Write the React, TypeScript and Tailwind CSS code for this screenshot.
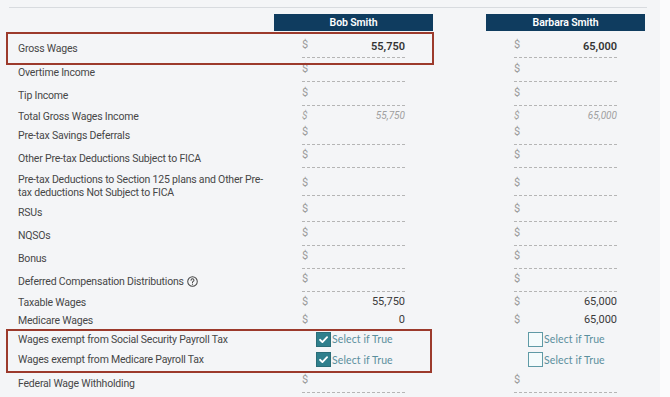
import React from "react";

type Row = {
  label: React.ReactNode;
  h: string;
  kind: "input" | "total" | "calc" | "check";
  bob?: string;
  barb?: string;
  bold?: boolean;
  bobChecked?: boolean;
  barbChecked?: boolean;
};

function QIcon() {
  return (
    <svg width="11" height="11" viewBox="0 0 12 12" className="inline-block ml-[3px] -mt-[2px]">
      <circle cx="6" cy="6" r="5.2" fill="none" stroke="#444" strokeWidth="1.1" />
      <path d="M4.4 4.7c0-1 .7-1.6 1.6-1.6s1.6.6 1.6 1.4c0 .7-.4 1-.9 1.3-.4.3-.7.5-.7 1.1v.3" fill="none" stroke="#444" strokeWidth="1.1" strokeLinecap="round" />
      <circle cx="6" cy="8.9" r=".65" fill="#444" />
    </svg>
  );
}

const rows: Row[] = [
  { label: "Gross Wages", h: "h-[24px]", kind: "input", bob: "55,750", barb: "65,000", bold: true },
  { label: "Overtime Income", h: "h-[24px]", kind: "input" },
  { label: "Tip Income", h: "h-[23px]", kind: "input" },
  { label: "Total Gross Wages Income", h: "h-[18px]", kind: "total", bob: "55,750", barb: "65,000" },
  { label: "Pre-tax Savings Deferrals", h: "h-[20px]", kind: "input" },
  { label: "Other Pre-tax Deductions Subject to FICA", h: "h-[26px]", kind: "input" },
  {
    label: "Pre-tax Deductions to Section 125 plans and Other Pre-tax deductions Not Subject to FICA",
    h: "h-[29px]",
    kind: "input",
  },
  { label: "RSUs", h: "h-[24px]", kind: "input" },
  { label: "NQSOs", h: "h-[23px]", kind: "input" },
  { label: "Bonus", h: "h-[23px]", kind: "input" },
  {
    label: (
      <span>
        Deferred Compensation Distributions
        <QIcon />
      </span>
    ),
    h: "h-[23px]",
    kind: "input",
  },
  { label: "Taxable Wages", h: "h-[18px]", kind: "calc", bob: "55,750", barb: "65,000" },
  { label: "Medicare Wages", h: "h-[18px]", kind: "calc", bob: "0", barb: "65,000" },
  { label: "Wages exempt from Social Security Payroll Tax", h: "h-[20px]", kind: "check", bobChecked: true, barbChecked: false },
  { label: "Wages exempt from Medicare Payroll Tax", h: "h-[21px]", kind: "check", bobChecked: true, barbChecked: false },
  { label: "Federal Wage Withholding", h: "h-[26px]", kind: "input" },
];

function Cell({ row, value, checked }: { row: Row; value?: string; checked?: boolean }) {
  if (row.kind === "input") {
    return (
      <div className="ml-[28px] w-[103px] h-[20px] flex justify-between items-start border-b border-dashed border-[#b5b5b5]">
        <span className="text-[11px] leading-[14px] text-[#9a9a9a]">$</span>
        {value && (
          <span className={`mt-[2px] text-[11px] leading-[14px] text-[#333] ${row.bold ? "font-semibold" : ""}`}>{value}</span>
        )}
      </div>
    );
  }
  if (row.kind === "total") {
    return (
      <div className="ml-[28px] w-[103px] flex justify-between items-center italic text-[10px] leading-[14px] text-[#a0a0a0]">
        <span>$</span>
        <span>{value}</span>
      </div>
    );
  }
  if (row.kind === "calc") {
    return (
      <div className="ml-[28px] w-[103px] flex justify-between items-center text-[11px] leading-[14px]">
        <span className="text-[#9a9a9a]">$</span>
        <span className="text-[#3a3a3a]">{value}</span>
      </div>
    );
  }
  return (
    <div className="ml-[42px] flex items-center" style={{ fontFamily: "Lato, 'Open Sans', sans-serif" }}>
      {checked ? (
        <span className="w-[15px] h-[15px] bg-[#2f7f8c] border border-[#2a6d78] flex items-center justify-center">
          <svg width="11" height="11" viewBox="0 0 12 12">
            <path d="M2.2 6.3 4.8 8.8 9.9 3.4" fill="none" stroke="#fff" strokeWidth="2" strokeLinecap="round" strokeLinejoin="round" />
          </svg>
        </span>
      ) : (
        <span className="w-[15px] h-[15px] bg-[#f4fbfc] border border-[#5f9aa6]" />
      )}
      <span className="ml-[1px] text-[10.5px] leading-[14px] text-[#5a8f9d] tracking-[0.1px]">Select if True</span>
    </div>
  );
}

export default function App() {
  return (
    <div className="w-[670px] h-[397px] bg-[#fbfbfc] overflow-hidden" style={{ fontFamily: "Roboto, 'Liberation Sans', sans-serif" }}>
      <div className="relative w-[660px] h-[397px] bg-[#f4f5f7] pt-[7px]">
        <div className="ml-[9px] w-[638px] h-px bg-[#d8dbdf]" />
        <div className="flex mt-[6px] h-[17px]">
          <div className="w-[274px]" />
          <div className="w-[159px] bg-[#0f3c5f] text-white text-[10.5px] font-semibold tracking-[-0.1px] flex items-center justify-center">Bob Smith</div>
          <div className="w-[53px]" />
          <div className="w-[159px] bg-[#0f3c5f] text-white text-[10.5px] font-semibold tracking-[-0.1px] flex items-center justify-center">Barbara Smith</div>
        </div>
        <div className="mt-[5px]">
          {rows.map((r, i) => (
            <div key={i} className={`flex items-center ${r.h}`}>
              <div className="w-[274px] pl-[18px] pr-[6px] text-[10.5px] leading-[13px] tracking-[-0.2px] text-[#474747]">{r.label}</div>
              <div className="w-[159px]">
                <Cell row={r} value={r.bob} checked={r.bobChecked} />
              </div>
              <div className="w-[53px]" />
              <div className="w-[159px]">
                <Cell row={r} value={r.barb} checked={r.barbChecked} />
              </div>
            </div>
          ))}
        </div>
        <div className="absolute left-[6px] top-[32px] w-[428px] h-[33px] border-2 border-[#9c3a2c] pointer-events-none" />
        <div className="absolute left-[6px] top-[329px] w-[426px] h-[44px] border-2 border-[#9c3a2c] pointer-events-none" />
      </div>
    </div>
  );
}
